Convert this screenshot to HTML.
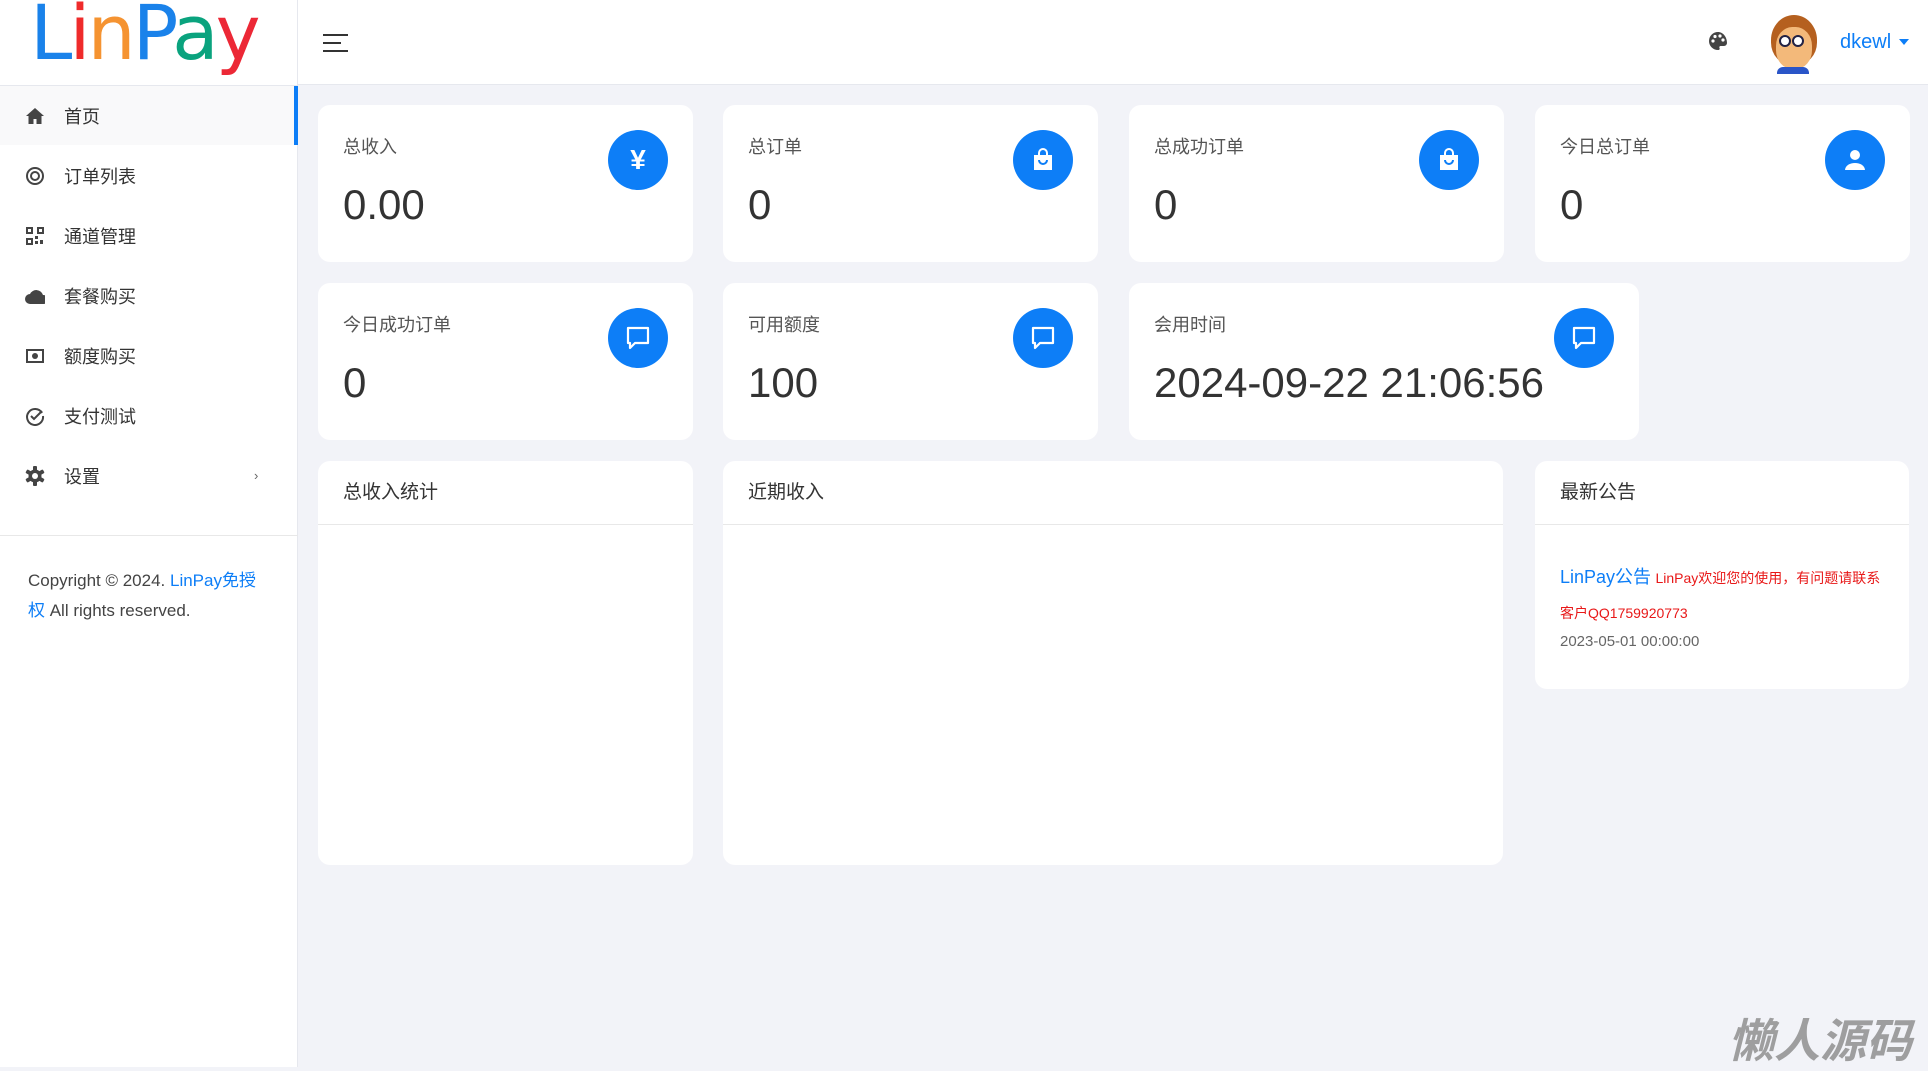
<!DOCTYPE html><html><head><meta charset="utf-8"><style>
*{box-sizing:border-box;margin:0;padding:0}
body{width:1928px;height:1067px;background:#f2f3f8;font-family:"Liberation Sans","Noto Sans CJK SC",sans-serif;position:relative;overflow:hidden;color:#333}
.side{position:absolute;left:0;top:0;width:298px;height:1067px;background:#fff;border-right:1px solid #e6e8ee}
.logo{position:absolute;left:30px;top:-11px;font-size:76px;line-height:1.16;font-weight:normal;letter-spacing:-3px;font-family:"DejaVu Sans","Liberation Sans",sans-serif}
.hdr{position:absolute;left:298px;top:0;right:0;height:85px;background:#fff;border-bottom:1px solid #e6e8ee}
.topline{position:absolute;left:0;top:85px;width:298px;border-top:1px solid #e6e8ee}
.mi{position:absolute;left:0;width:298px;height:59px;display:flex;align-items:center;font-size:18px;color:#333}
.mi .ic{width:20px;height:20px;margin-left:25px;margin-right:19px;display:flex;align-items:center;justify-content:center}
.act{background:#f9f9fa;border-right:4px solid #0d7ef7}
.card{position:absolute;background:#fff;border-radius:12px;width:375px;height:157px}
.lab{position:absolute;left:25px;top:28px;font-size:18px;color:#555}
.val{position:absolute;left:25px;top:76px;font-size:42px;color:#333}
.circ{position:absolute;right:25px;top:25px;width:60px;height:60px;border-radius:50%;background:#0d7ef7;display:flex;align-items:center;justify-content:center;color:#fff}
.pc{position:absolute;top:461px;background:#fff;border-radius:12px}
.pc h3{font-weight:normal;font-size:19px;color:#333;height:64px;line-height:64px;padding-left:25px;border-bottom:1px solid #e8e8e8}
</style></head><body>
<div class="side">
<div class="logo"><span style="color:#1a82ea">L</span><span style="color:#ef2b2b">i</span><span style="color:#f59331">n</span><span style="color:#1a82ea">P</span><span style="color:#0aa37e">a</span><span style="color:#ec2836">y</span></div>
<div class="topline"></div>
<div class="mi act" style="top:86px"><span class="ic"><svg width="18" height="16" viewBox="0 0 18 16"><path d="M9 0L0 8h2.5v8h5v-5h3v5h5V8H18z" fill="#444"/></svg></span>首页</div>
<div class="mi" style="top:146px"><span class="ic"><svg width="20" height="20"><circle cx="10" cy="10" r="8" fill="none" stroke="#444" stroke-width="2"/><circle cx="10" cy="10" r="4" fill="none" stroke="#444" stroke-width="2"/></svg></span>订单列表</div>
<div class="mi" style="top:206px"><span class="ic"><svg width="18" height="18"><g fill="none" stroke="#444" stroke-width="2"><rect x="1" y="1" width="5" height="5"/><rect x="12" y="1" width="5" height="5"/><rect x="1" y="12" width="5" height="5"/></g><rect x="9" y="9" width="3" height="3" fill="#444"/><rect x="14" y="13" width="3" height="4" fill="#444"/><rect x="9" y="14" width="3" height="3" fill="#444"/></svg></span>通道管理</div>
<div class="mi" style="top:266px"><span class="ic"><svg width="24" height="16"><path d="M5 16a5 5 0 010-10 7 7 0 0113 1 4.5 4.5 0 011 9z" fill="#444"/></svg></span>套餐购买</div>
<div class="mi" style="top:326px"><span class="ic"><svg width="18" height="14"><rect x="1" y="1" width="16" height="12" fill="none" stroke="#444" stroke-width="2"/><circle cx="9" cy="7" r="3" fill="#444"/></svg></span>额度购买</div>
<div class="mi" style="top:386px"><span class="ic"><svg width="20" height="20"><path d="M17 7A8 8 0 1 0 18 10" fill="none" stroke="#444" stroke-width="2"/><path d="M6 10l3 3 8-8" fill="none" stroke="#444" stroke-width="2"/></svg></span>支付测试</div>
<div class="mi" style="top:446px"><span class="ic"><svg width="20" height="20" viewBox="0 0 20 20"><g fill="#444"><circle cx="10" cy="10" r="6.5"/><rect x="8" y="0" width="4" height="20" rx="1"/><rect x="8" y="0" width="4" height="20" rx="1" transform="rotate(60 10 10)"/><rect x="8" y="0" width="4" height="20" rx="1" transform="rotate(120 10 10)"/></g><circle cx="10" cy="10" r="3" fill="#fff"/></svg></span>设置<span style="position:absolute;left:254px;font-size:13px;color:#666">›</span></div>
<div style="position:absolute;top:535px;left:0;width:298px;border-top:1px solid #e8e8e8"></div>
<div style="position:absolute;left:28px;top:566px;width:240px;font-size:17px;line-height:30px;color:#444">Copyright © 2024. <span style="color:#0d7ef7">LinPay免授权</span> All rights reserved.</div>
</div>
<div class="hdr">
<svg style="position:absolute;left:25px;top:34px" width="25" height="18"><g stroke="#333" stroke-width="2"><line x1="0" y1="1" x2="25" y2="1"/><line x1="0" y1="9" x2="18" y2="9"/><line x1="0" y1="17" x2="25" y2="17"/></g></svg>
<svg style="position:absolute;left:1410px;top:31px" width="20" height="20" viewBox="0 0 20 20"><path d="M10 1a9 9 0 000 18c1.5 0 2-1 1.5-2s0-2 1.5-2H16a3 3 0 003-3c0-6-4-11-9-11z" fill="#444"/><circle cx="5" cy="10" r="1.6" fill="#fff"/><circle cx="7" cy="5.5" r="1.6" fill="#fff"/><circle cx="12" cy="5" r="1.6" fill="#fff"/><circle cx="15" cy="9" r="1.6" fill="#fff"/></svg>
<div style="position:absolute;left:1469px;top:15px;width:52px;height:58px">
<div style="position:absolute;left:4px;top:0;width:46px;height:50px;border-radius:50% 50% 45% 45%;background:#b5601f"></div>
<div style="position:absolute;left:9px;top:12px;width:36px;height:42px;border-radius:45%;background:#f3b97a"></div>
<div style="position:absolute;left:12px;top:20px;width:12px;height:12px;border-radius:50%;background:#fff;border:2px solid #224"></div>
<div style="position:absolute;left:25px;top:20px;width:12px;height:12px;border-radius:50%;background:#fff;border:2px solid #224"></div>
<div style="position:absolute;left:10px;top:52px;width:32px;height:7px;border-radius:6px 6px 0 0;background:#2a55c8"></div></div>
<div style="position:absolute;left:1542px;top:31px;font-size:20px;color:#0d7ef7">dkewl</div>
<div style="position:absolute;left:1601px;top:39px;border:5px solid transparent;border-top:6px solid #0d7ef7"></div>
</div>
<div class="card" style="left:318px;top:105px"><div class="lab">总收入</div><div class="val">0.00</div><div class="circ" style="font-size:28px;font-weight:bold">¥</div></div>
<div class="card" style="left:723px;top:105px"><div class="lab">总订单</div><div class="val">0</div><div class="circ"><svg width="22" height="24"><path d="M2 7h18v15H2z" fill="#fff"/><path d="M7 9V5a4 4 0 018 0v4" fill="none" stroke="#fff" stroke-width="2"/><path d="M7 12a4 4 0 008 0" fill="none" stroke="#0d7ef7" stroke-width="2"/></svg></div></div>
<div class="card" style="left:1129px;top:105px"><div class="lab">总成功订单</div><div class="val">0</div><div class="circ"><svg width="22" height="24"><path d="M2 7h18v15H2z" fill="#fff"/><path d="M7 9V5a4 4 0 018 0v4" fill="none" stroke="#fff" stroke-width="2"/><path d="M7 12a4 4 0 008 0" fill="none" stroke="#0d7ef7" stroke-width="2"/></svg></div></div>
<div class="card" style="left:1535px;top:105px"><div class="lab">今日总订单</div><div class="val">0</div><div class="circ"><svg width="22" height="22"><circle cx="11" cy="6" r="5" fill="#fff"/><path d="M1 21a10 7 0 0120 0z" fill="#fff"/></svg></div></div>
<div class="card" style="left:318px;top:283px"><div class="lab">今日成功订单</div><div class="val">0</div><div class="circ"><svg width="24" height="24"><path d="M2 2h20v15H9l-5 5v-5H2z" fill="none" stroke="#fff" stroke-width="2.2" stroke-linejoin="round"/></svg></div></div>
<div class="card" style="left:723px;top:283px"><div class="lab">可用额度</div><div class="val">100</div><div class="circ"><svg width="24" height="24"><path d="M2 2h20v15H9l-5 5v-5H2z" fill="none" stroke="#fff" stroke-width="2.2" stroke-linejoin="round"/></svg></div></div>
<div class="card" style="left:1129px;top:283px;width:510px"><div class="lab">会用时间</div><div class="val">2024-09-22 21:06:56</div><div class="circ"><svg width="24" height="24"><path d="M2 2h20v15H9l-5 5v-5H2z" fill="none" stroke="#fff" stroke-width="2.2" stroke-linejoin="round"/></svg></div></div>
<div class="pc" style="left:318px;width:375px;height:404px"><h3>总收入统计</h3></div>
<div class="pc" style="left:723px;width:780px;height:404px"><h3>近期收入</h3></div>
<div class="pc" style="left:1535px;width:374px;height:228px"><h3>最新公告</h3>
<div style="padding:35px 25px 0;line-height:34px"><span style="color:#0d7ef7;font-size:18px">LinPay公告</span> <span style="color:#e81818;font-size:14px">LinPay欢迎您的使用，有问题请联系客户QQ1759920773</span></div>
<div style="padding:0 25px;font-size:15px;color:#666;line-height:22px">2023-05-01 00:00:00</div></div>
<div style="position:absolute;left:1728px;top:1005px;font-size:46px;font-weight:bold;font-style:italic;color:#8a8a8a;opacity:.8">懒人源码</div>
</body></html>
